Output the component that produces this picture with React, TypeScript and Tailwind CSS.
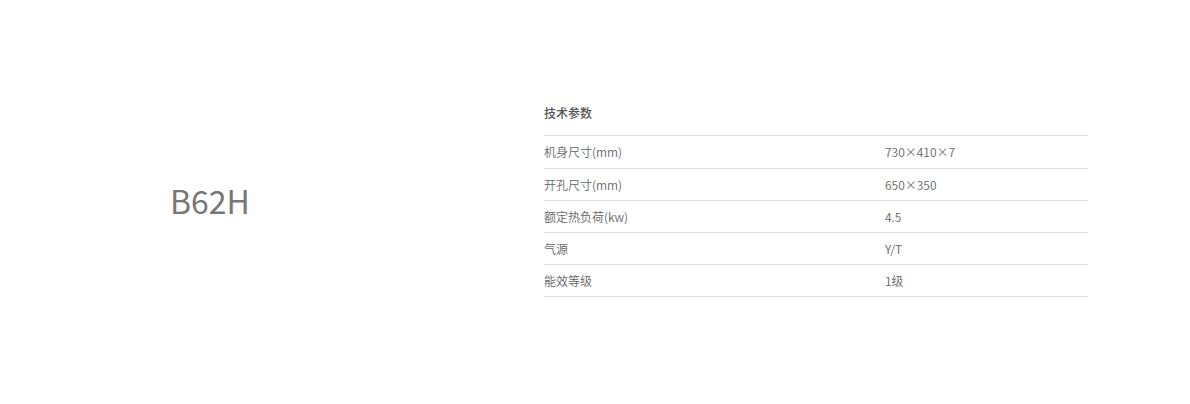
const specs = [
  { label: "机身尺寸(mm)", value: "730×410×7" },
  { label: "开孔尺寸(mm)", value: "650×350" },
  { label: "额定热负荷(kw)", value: "4.5" },
  { label: "气源", value: "Y/T" },
  { label: "能效等级", value: "1级" },
];

export default function App() {
  return (
    <div
      className="w-[1190px] h-[404px] bg-white flex"
      style={{ fontFamily: '"Noto Sans CJK SC", "Noto Sans", sans-serif' }}
    >
      {/* model name */}
      <div className="w-[544px] pl-[170px] flex items-center pb-[4px]">
        <h1 className="text-[32px] leading-none text-[#777777] font-normal">B62H</h1>
      </div>

      {/* spec table */}
      <div className="w-[544px] pt-[97px]">
        <div className="h-[39px] border-b border-[#dddddd] text-[12px] leading-[32px] font-medium text-[#555555]">
          技术参数
        </div>
        {specs.map((s, i) => (
          <div
            key={i}
            className={`flex items-center border-b border-[#dddddd] text-[12px] font-[350] text-[#666666] ${
              i === 0 ? "h-[33px]" : "h-[32px]"
            }`}
          >
            <span className="w-[341px]">{s.label}</span>
            <span>{s.value}</span>
          </div>
        ))}
      </div>
    </div>
  );
}
